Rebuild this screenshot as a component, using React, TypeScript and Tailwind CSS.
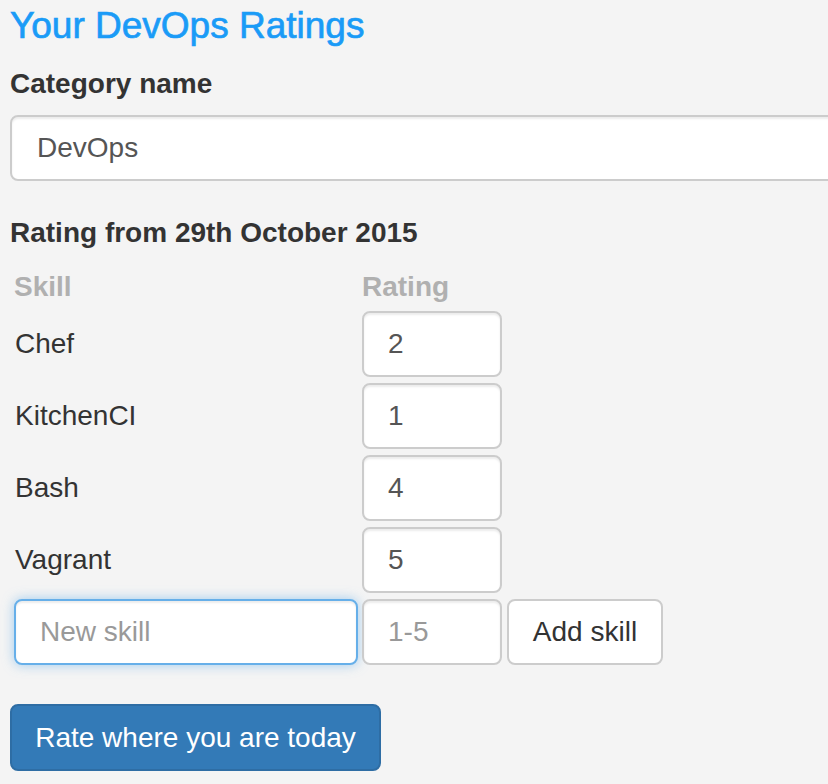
import { useState } from "react";

interface Skill {
  name: string;
  rating: number;
}

const initialSkills: Skill[] = [
  { name: "Chef", rating: 2 },
  { name: "KitchenCI", rating: 1 },
  { name: "Bash", rating: 4 },
  { name: "Vagrant", rating: 5 },
];

const inputBase =
  "h-[66px] rounded-[8px] border-2 border-[#cccccc] bg-white text-[28px] text-[#555555] shadow-[inset_0_2px_2px_rgba(0,0,0,0.075)] outline-none placeholder:text-[#999999]";

export default function App() {
  const [category, setCategory] = useState("DevOps");
  const [skills, setSkills] = useState<Skill[]>(initialSkills);
  const [newSkill, setNewSkill] = useState("");
  const [newRating, setNewRating] = useState("");

  const addSkill = () => {
    const rating = parseInt(newRating, 10);
    if (!newSkill || !rating) return;
    setSkills([...skills, { name: newSkill, rating }]);
    setNewSkill("");
    setNewRating("");
  };

  return (
    <div className="min-h-screen w-[828px] overflow-hidden bg-[#f4f4f4] font-['Liberation_Sans',Arial,sans-serif] text-[#333333]">
      <div className="flex flex-col pl-[10px] pt-[4px]">
        <h3 className="text-[37px] leading-[43px] text-[#1a9bf7] [-webkit-text-stroke:0.7px_#1a9bf7]">
          Your DevOps Ratings
        </h3>

        <label className="mt-[21px] text-[28px] font-bold leading-[32px]">
          Category name
        </label>
        <input
          className={`${inputBase} mt-[15px] w-[840px] px-[25px]`}
          value={category}
          onChange={(e) => setCategory(e.target.value)}
        />

        <div className="mt-[36px] text-[28px] font-bold leading-[32px]">
          Rating from 29th October 2015
        </div>

        <div className="mt-[22px] flex flex-col pl-[4px]">
          <div className="flex text-[28px] font-bold leading-[32px] text-[#b0b0b0]">
            <div className="w-[348px]">Skill</div>
            <div>Rating</div>
          </div>

          <div className="mt-[8px] flex flex-col gap-[6px]">
            {skills.map((skill) => (
              <div key={skill.name} className="flex h-[66px] items-center">
                <div className="w-[348px] pl-[1px] text-[28px]">{skill.name}</div>
                <input
                  className={`${inputBase} w-[140px] px-[24px]`}
                  defaultValue={skill.rating}
                />
              </div>
            ))}

            <div className="flex items-center">
              <input
                className="h-[66px] w-[344px] rounded-[8px] border-2 border-[#66afe9] bg-white px-[24px] text-[28px] text-[#555555] shadow-[inset_0_2px_2px_rgba(0,0,0,0.075),0_0_12px_rgba(102,175,233,0.6)] outline-none placeholder:text-[#999999]"
                placeholder="New skill"
                value={newSkill}
                onChange={(e) => setNewSkill(e.target.value)}
              />
              <input
                className={`${inputBase} ml-[4px] w-[140px] px-[24px]`}
                placeholder="1-5"
                value={newRating}
                onChange={(e) => setNewRating(e.target.value)}
              />
              <button
                className="ml-[5px] h-[66px] w-[156px] rounded-[8px] border-2 border-[#cccccc] bg-white text-[28px] text-[#333333]"
                onClick={addSkill}
              >
                Add skill
              </button>
            </div>
          </div>
        </div>

        <button className="mt-[39px] h-[67px] w-[371px] rounded-[8px] border-2 border-[#2e6da4] bg-[#337ab7] text-[28px] text-white">
          Rate where you are today
        </button>
      </div>
    </div>
  );
}
